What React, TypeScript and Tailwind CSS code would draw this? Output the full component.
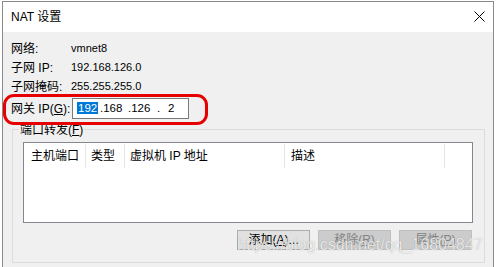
const font = "font-['Liberation_Sans','Noto_Sans_CJK_SC',sans-serif]";

function InfoRow({ label, value }: { label: string; value: string }) {
  return (
    <div className="flex h-[19px] items-center">
      <span className="w-[60px] text-[12px]">{label}</span>
      <span className="text-[11px]">{value}</span>
    </div>
  );
}

function Button({
  children,
  disabled,
}: {
  children: React.ReactNode;
  disabled?: boolean;
}) {
  return (
    <button
      type="button"
      disabled={disabled}
      className={
        disabled
          ? "flex h-[20px] w-[73px] items-center justify-center border border-[#bfbfbf] bg-[#cccccc] text-[12px] text-[#838383]"
          : "flex h-[20px] w-[73px] items-center justify-center border border-[#adadad] bg-[#e1e1e1] text-[12px] text-black"
      }
    >
      {children}
    </button>
  );
}

export default function App() {
  return (
    <div
      className={`relative h-[267px] w-[496px] overflow-hidden bg-white text-black ${font}`}
    >
      <div className="ml-[2px] mt-[1px] h-[300px] w-[492px] border border-b-0 border-[#8a8a8a] bg-[#f0f0f0]">
        {/* title bar */}
        <div className="flex h-[30px] items-center bg-white pb-[1px] pl-[8px] pr-[8px]">
          <span className="text-[12px]">NAT 设置</span>
          <svg
            className="ml-auto"
            width="11"
            height="11"
            viewBox="0 0 11 11"
            fill="none"
            stroke="#000"
            strokeWidth="1"
          >
            <path d="M0.5 0.5 L10.5 10.5 M10.5 0.5 L0.5 10.5" />
          </svg>
        </div>

        <div className="pl-[8px] pt-[7px]">
          <InfoRow label="网络:" value="vmnet8" />
          <InfoRow label="子网 IP:" value="192.168.126.0" />
          <InfoRow label="子网掩码:" value="255.255.255.0" />

          <div className="mt-[2px] flex h-[21px] items-center">
            <span className="w-[61px] text-[12px]">
              网关 IP(<span className="underline">G</span>):
            </span>
            <div className="flex h-[21px] w-[117px] items-center border border-[#7a7a7a] bg-white pl-[4px] text-[11.5px]">
              <span className="w-[23px]">
                <span className="inline-block bg-[#0078d7] px-[1px] leading-[12px] text-white">
                  192
                </span>
              </span>
              <span className="w-[28px]">.168</span>
              <span className="w-[29px]">.126</span>
              <span className="w-[11px]">.</span>
              <span>2</span>
            </div>
          </div>
        </div>

        {/* port forwarding group */}
        <div className="relative ml-[9px] mt-[10px] h-[134px] w-[473px] border border-[#dcdcdc] pl-[10px] pt-[12px]">
          <span className="absolute -top-[7px] left-[6px] bg-[#f0f0f0] px-[1px] text-[12px] leading-[14px]">
            端口转发(<span className="underline">F</span>)
          </span>

          <div className="h-[81px] w-[450px] border border-[#828790] bg-white">
            <div className="flex h-[25px] pt-[1px] text-[12px]">
              <div className="flex w-[62px] items-center border-r border-[#e5e5e5] pl-[7px]">
                主机端口
              </div>
              <div className="flex w-[39px] items-center border-r border-[#e5e5e5] pl-[5px]">
                类型
              </div>
              <div className="flex w-[160px] items-center border-r border-[#e5e5e5] pl-[5px]">
                虚拟机 IP 地址
              </div>
              <div className="flex w-[160px] items-center border-r border-[#e5e5e5] pl-[6px]">
                描述
              </div>
            </div>
          </div>

          <div className="mt-[7px] flex w-[449px] justify-end gap-[8px]">
            <Button>
              添加(<span className="underline">A</span>)...
            </Button>
            <Button disabled>
              移除(<span className="underline">R</span>)
            </Button>
            <Button disabled>
              属性(<span className="underline">P</span>)
            </Button>
          </div>
        </div>
      </div>

      {/* red highlight ring */}
      <div className="absolute left-[3px] top-[94px] h-[31px] w-[205px] rounded-[11px] border-[3px] border-[#e60000]" />

      {/* watermark */}
      <div className="pointer-events-none absolute left-[237px] top-[237px] text-[16px] leading-[16px] text-[rgba(255,255,255,0.8)] [text-shadow:0_0_1px_rgba(0,0,0,0.35)]">
        https://blog.csdn.net/qq_16804847
      </div>
    </div>
  );
}
